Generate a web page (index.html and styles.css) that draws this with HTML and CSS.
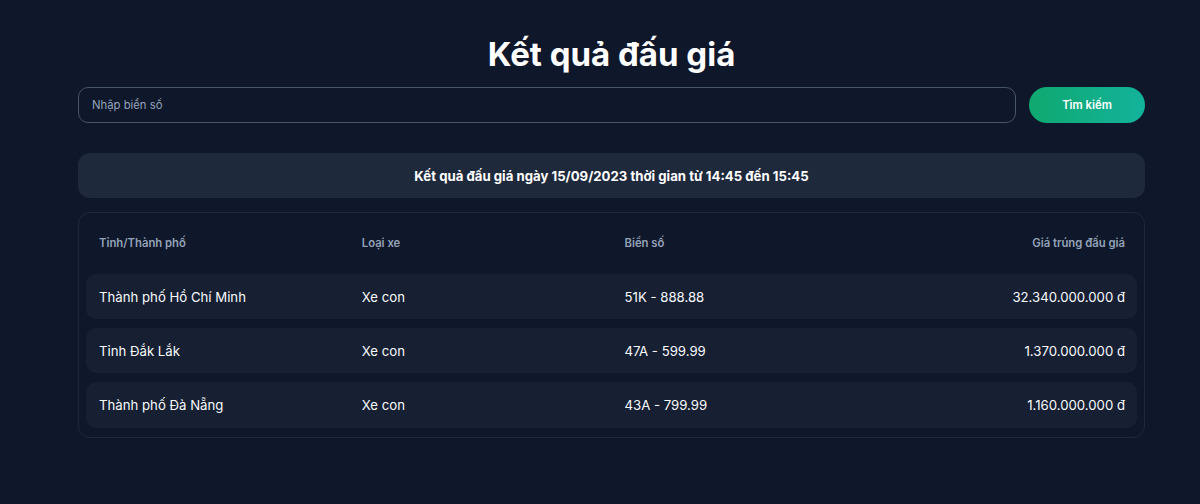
FILE: index.html
```html
<!DOCTYPE html>
<html lang="vi">
<head>
<meta charset="utf-8">
<title>Kết quả đấu giá</title>
<link rel="stylesheet" href="styles.css">
</head>
<body>
<main class="page">
  <h1 class="title">Kết quả đấu giá</h1>
  <form class="search">
    <input class="search-input" type="text" placeholder="Nhập biển số">
    <button class="search-btn" type="button">Tìm kiếm</button>
  </form>
  <div class="banner">Kết quả đấu giá ngày 15/09/2023 thời gian từ 14:45 đến 15:45</div>
  <section class="results">
    <div class="row head">
      <div class="cell">Tỉnh/Thành phố</div>
      <div class="cell">Loại xe</div>
      <div class="cell">Biển số</div>
      <div class="cell right">Giá trúng đấu giá</div>
    </div>
    <div class="row item">
      <div class="cell">Thành phố Hồ Chí Minh</div>
      <div class="cell">Xe con</div>
      <div class="cell">51K - 888.88</div>
      <div class="cell right">32.340.000.000 đ</div>
    </div>
    <div class="row item">
      <div class="cell">Tỉnh Đắk Lắk</div>
      <div class="cell">Xe con</div>
      <div class="cell">47A - 599.99</div>
      <div class="cell right">1.370.000.000 đ</div>
    </div>
    <div class="row item">
      <div class="cell">Thành phố Đà Nẵng</div>
      <div class="cell">Xe con</div>
      <div class="cell">43A - 799.99</div>
      <div class="cell right">1.160.000.000 đ</div>
    </div>
  </section>
</main>
</body>
</html>
```
FILE: styles.css
```css
* { box-sizing: border-box; }
html, body {
  margin: 0;
  background: #0f172a;
  font-family: Inter, "Noto Sans", sans-serif;
  color: #f1f5f9;
}
.page {
  width: 1067px;
  margin: 0 55px 0 78px;
  padding-top: 34px;
}
.title {
  margin: 0;
  text-align: center;
  font-size: 33px;
  line-height: 40px;
  font-weight: 700;
  color: #ffffff;
}
.search {
  display: flex;
  gap: 13px;
  margin-top: 13px;
}
.search-input {
  flex: 1;
  height: 36px;
  border: 1px solid #475569;
  border-radius: 10px;
  background: transparent;
  padding: 0 13px;
  font-family: inherit;
  font-size: 11.3px;
  color: #f1f5f9;
  outline: none;
}
.search-input::placeholder { color: #94a3b8; }
.search-btn {
  width: 116px;
  height: 36px;
  border: 0;
  border-radius: 18px;
  background: linear-gradient(90deg, #0fa86f, #13b39c);
  color: #ffffff;
  font-family: inherit;
  font-size: 11.3px;
  font-weight: 600;
}
.banner {
  margin-top: 30px;
  height: 45px;
  border-radius: 12px;
  background: #1e293b;
  display: flex;
  align-items: center;
  justify-content: center;
  font-size: 13.2px;
  font-weight: 700;
  color: #ffffff;
}
.results {
  margin-top: 14px;
  border: 1px solid #1e293b;
  border-radius: 12px;
  padding: 0 7px 9px;
  display: flex;
  flex-direction: column;
  gap: 9px;
}
.row {
  display: grid;
  grid-template-columns: repeat(4, 1fr);
  align-items: center;
}
.cell {
  padding: 0 12px 0 13px;
}
.right { text-align: right; }
.head {
  height: 52px;
  padding-top: 7px;
  font-size: 11.3px;
  font-weight: 600;
  color: #94a3b8;
}
.item {
  height: 45px;
  border-radius: 10px;
  background: #172033;
  font-size: 13.2px;
  color: #f8fafc;
}
.item:last-child { height: 46px; }
```
